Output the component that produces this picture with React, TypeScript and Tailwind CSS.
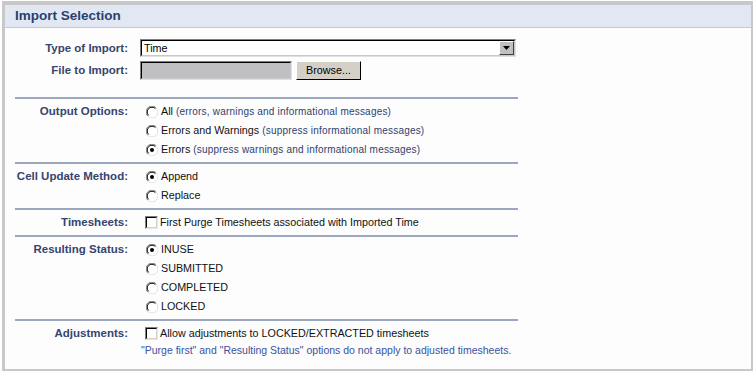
import React from "react";

const Radio = ({ checked }: { checked?: boolean }) => (
  <svg width="12" height="12" viewBox="0 0 12 12" className="shrink-0">
    <circle cx="6" cy="6" r="5.5" fill="#ffffff" />
    <path d="M10.2 1.8 A5.6 5.6 0 0 0 1.8 10.2" fill="none" stroke="#808080" strokeWidth="1" />
    <path d="M9.4 2.6 A4.6 4.6 0 0 0 2.6 9.4" fill="none" stroke="#000000" strokeWidth="1" />
    <path d="M10.2 1.8 A5.6 5.6 0 0 1 1.8 10.2" fill="none" stroke="#e0e0e0" strokeWidth="1" />
    {checked && <circle cx="6" cy="6" r="2" fill="#000000" />}
  </svg>
);

const Checkbox = () => (
  <div className="w-[13px] h-[13px] shrink-0 border border-t-[#808080] border-l-[#808080] border-b-[#e8e8e8] border-r-[#e8e8e8] bg-white">
    <div className="w-full h-full border border-t-[#000000] border-l-[#000000] border-b-[#d4d0c8] border-r-[#d4d0c8] bg-white" />
  </div>
);

const Label = ({ children }: { children: React.ReactNode }) => (
  <div className="w-[113px] shrink-0 text-right text-[11.5px] font-bold text-[#36446e] leading-[19px] whitespace-nowrap">
    {children}
  </div>
);

const Opt = ({ checked, main, sub }: { checked?: boolean; main: string; sub?: string }) => (
  <div className="h-[19px] flex items-center pl-[6px]">
    <Radio checked={checked} />
    <span className="ml-[3px] text-[10.75px] text-[#111111] whitespace-nowrap">
      {main}
      {sub && <span className="text-[10px] tracking-[0.2px] text-[#30406f]"> {sub}</span>}
    </span>
  </div>
);

const Section = ({ label, children, last }: { label: string; children: React.ReactNode; last?: boolean }) => (
  <div className={`w-[503px] flex border-t-2 border-[#9aa7bf] ${last ? "pt-[3px]" : "py-[3px]"}`}>
    <Label>{label}</Label>
    <div className="ml-[12px] flex flex-col">{children}</div>
  </div>
);

export default function App() {
  return (
    <div className="w-[756px] h-[376px] bg-white font-['Liberation_Sans',Arial,sans-serif]">
      <div className="ml-[2px] mt-[1px] w-[751px] h-[370px] border-[#c8c8c8] border-t-4 border-l-[3px] border-r-2 border-b-2 bg-[#fcfdfc] flex flex-col">
        <div className="h-[23px] bg-[#e2e8f3] border-b border-[#c4c8d2] pl-[10px] flex items-center">
          <span className="text-[13.5px] font-bold text-[#2a3f6f]">Import Selection</span>
        </div>
        <div className="pl-[10px] pt-[11px] flex flex-col">
          <div className="w-[503px] flex flex-col pb-[17px]">
            <div className="flex items-center h-[18px]">
              <Label>Type of Import:</Label>
              <div className="ml-[12px] w-[376px] h-[18px] border border-t-[#808080] border-l-[#808080] border-b-[#e0e0e0] border-r-[#e0e0e0]">
                <div className="w-full h-full border border-t-[#000000] border-l-[#000000] border-b-[#c8c8c8] border-r-[#c8c8c8] bg-white flex items-center justify-between">
                  <span className="pl-[2px] text-[10.75px] text-black leading-none">Time</span>
                  <div className="w-[15px] h-[14px] bg-[#c0c0c0] border border-t-[#ffffff] border-l-[#ffffff] border-b-[#404040] border-r-[#404040] flex items-center justify-center">
                    <svg width="7" height="4" viewBox="0 0 7 4">
                      <path d="M0 0 H7 L3.5 4 Z" fill="#000000" />
                    </svg>
                  </div>
                </div>
              </div>
            </div>
            <div className="flex items-center h-[19px] mt-[4px]">
              <Label>File to Import:</Label>
              <div className="ml-[12px] w-[152px] h-[19px] border border-t-[#808080] border-l-[#808080] border-b-[#e0e0e0] border-r-[#e0e0e0]">
                <div className="w-full h-full border border-t-[#000000] border-l-[#000000] border-b-[#c8c8c8] border-r-[#c8c8c8] bg-[#c0bfc1]" />
              </div>
              <div className="ml-[4px] w-[65px] h-[19px] bg-[#d4d0c8] border border-t-[#ffffff] border-l-[#ffffff] border-b-[#000000] border-r-[#000000] flex items-center justify-center">
                <span className="text-[10.75px] text-black leading-none">Browse...</span>
              </div>
            </div>
          </div>

          <Section label="Output Options:">
            <Opt main="All" sub="(errors, warnings and informational messages)" />
            <Opt main="Errors and Warnings" sub="(suppress informational messages)" />
            <Opt checked main="Errors" sub="(suppress warnings and informational messages)" />
          </Section>

          <Section label="Cell Update Method:">
            <Opt checked main="Append" />
            <Opt main="Replace" />
          </Section>

          <Section label="Timesheets:">
            <div className="h-[19px] flex items-center pl-[5px]">
              <Checkbox />
              <span className="ml-[2px] text-[10.75px] text-[#111111] whitespace-nowrap">
                First Purge Timesheets associated with Imported Time
              </span>
            </div>
          </Section>

          <Section label="Resulting Status:">
            <Opt checked main="INUSE" />
            <Opt main="SUBMITTED" />
            <Opt main="COMPLETED" />
            <Opt main="LOCKED" />
          </Section>

          <Section label="Adjustments:" last>
            <div className="h-[19px] flex items-center pl-[5px]">
              <Checkbox />
              <span className="ml-[2px] text-[10.75px] text-[#111111] whitespace-nowrap">
                Allow adjustments to LOCKED/EXTRACTED timesheets
              </span>
            </div>
            <div className="h-[16px] flex items-center pl-[1px]">
              <span className="text-[10.5px] text-[#3a52a0] whitespace-nowrap">
                "Purge first" and "Resulting Status" options do not apply to adjusted timesheets.
              </span>
            </div>
          </Section>
        </div>
      </div>
    </div>
  );
}
